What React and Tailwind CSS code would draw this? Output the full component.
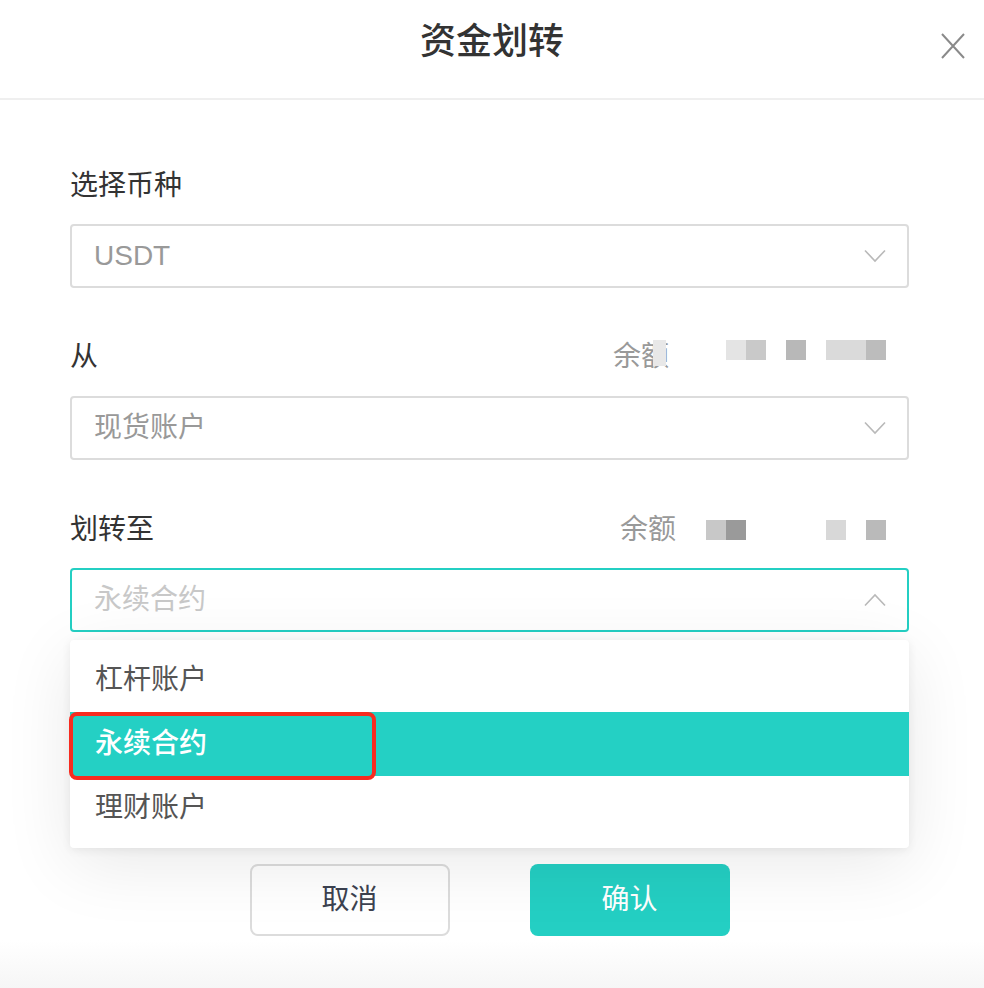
import { useState } from "react";

const ChevronDown = () => (
    <svg width="22" height="14" viewBox="0 0 22 14" fill="none">
        <path d="M1 1.5 L11 12 L21 1.5" stroke="#b9b9b9" strokeWidth="1.6" />
    </svg>
);

const ChevronUp = () => (
    <svg width="22" height="14" viewBox="0 0 22 14" fill="none">
        <path d="M1 12.5 L11 2 L21 12.5" stroke="#b9b9b9" strokeWidth="1.6" />
    </svg>
);

const CloseIcon = () => (
    <svg width="24" height="26" viewBox="0 0 24 26" fill="none">
        <path d="M1 1 L23 25 M23 1 L1 25" stroke="#8a8a8a" strokeWidth="2" />
    </svg>
);

const Select = ({ value, open, muted }) => (
    <div
        className={
            "flex h-[64px] items-center justify-between rounded-[4px] border-2 pl-[22px] pr-[21px] " +
            (open ? "border-[#24cfc3]" : "border-[#dcdcdc]")
        }
    >
        <span className={"text-[28px] leading-none " + (muted ? "text-[#c8c8c8]" : "text-[#999999]")}>
            {value}
        </span>
        {open ? <ChevronUp /> : <ChevronDown />}
    </div>
);

const App = () => {
    const [active] = useState(1)
    const options = ["杠杆账户", "永续合约", "理财账户"]

    return (
        <div className="relative flex h-[988px] w-[984px] flex-col overflow-hidden bg-white font-['Liberation_Sans','Noto_Sans_CJK_SC',sans-serif]">
            {/* header */}
            <div className="relative flex h-[100px] shrink-0 items-center justify-center border-b-2 border-[#efefef] pb-[14px]">
                <h1 className="text-[36px] font-medium leading-none text-[#333333]">资金划转</h1>
                <button className="absolute right-[19px] top-[33px]">
                    <CloseIcon />
                </button>
            </div>

            <div className="flex flex-col pl-[70px] pr-[75px] pt-[66px]">
                <div className="h-[40px] text-[28px] leading-[40px] text-[#333333]">选择币种</div>
                <div className="mt-[18px]">
                    <Select value="USDT" />
                </div>

                <div className="mt-[49px] flex h-[40px] items-center justify-between pr-[23px]">
                    <span className="text-[28px] leading-[40px] text-[#333333]">从</span>
                    <div className="flex items-center">
                        <span className="text-[28px] leading-none text-[#999999]">余额</span>
                        <div className="mb-[9px] flex items-start">
                            <span className="-ml-[16px] h-[26px] w-[13px] bg-[#e8e8e8]"></span>
                            <span className="ml-[60px] h-[20px] w-[20px] bg-[#e4e4e4]"></span>
                            <span className="h-[20px] w-[20px] bg-[#c9c9c9]"></span>
                            <span className="ml-[20px] h-[20px] w-[20px] bg-[#b8b8b8]"></span>
                            <span className="ml-[20px] h-[20px] w-[40px] bg-[#dadada]"></span>
                            <span className="h-[20px] w-[20px] bg-[#bcbcbc]"></span>
                        </div>
                    </div>
                </div>
                <div className="mt-[19px]">
                    <Select value="现货账户" />
                </div>

                <div className="mt-[50px] flex h-[40px] items-center justify-between pr-[23px]">
                    <span className="text-[28px] leading-[40px] text-[#333333]">划转至</span>
                    <div className="flex items-center">
                        <span className="text-[28px] leading-none text-[#999999]">余额</span>
                        <span className="ml-[30px] h-[20px] w-[20px] bg-[#c8c8c8]"></span>
                        <span className="h-[20px] w-[20px] bg-[#9a9a9a]"></span>
                        <span className="ml-[80px] h-[20px] w-[20px] bg-[#d8d8d8]"></span>
                        <span className="ml-[20px] h-[20px] w-[20px] bg-[#bababa]"></span>
                    </div>
                </div>
                <div className="relative mt-[18px]">
                    <Select value="永续合约" open muted />

                    {/* dropdown */}
                    <div className="absolute left-0 right-0 top-[72px] z-10 rounded-[4px] bg-white py-[8px] shadow-[0_2px_10px_rgba(0,0,0,0.07),0_16px_70px_rgba(0,0,0,0.09)]">
                        {options.map((item, i) => (
                            <div
                                key={item}
                                className={
                                    "relative flex h-[64px] items-center pl-[25px] text-[28px] leading-none " +
                                    (i === active ? "bg-[#24d0c4] font-medium text-white" : "text-[#555555]")
                                }
                            >
                                {item}
                                {i === active && (
                                    <span className="absolute -left-[1px] top-0 h-[68px] w-[307px] rounded-[8px] border-[4px] border-[#f72b1f]"></span>
                                )}
                            </div>
                        ))}
                    </div>
                </div>

                {/* buttons */}
                <div className="mt-[232px] flex justify-center gap-[80px]">
                    <button className="h-[72px] w-[200px] rounded-[8px] border-2 border-[#dcdcdc] text-[28px] text-[#3c4250]">
                        取消
                    </button>
                    <button className="h-[72px] w-[200px] rounded-[8px] bg-[#24cfc3] text-[28px] text-white">
                        确认
                    </button>
                </div>
            </div>

            <div className="mt-auto h-[48px] bg-gradient-to-b from-white to-[#f6f6f6]"></div>
        </div>
    );
};

export default App;
